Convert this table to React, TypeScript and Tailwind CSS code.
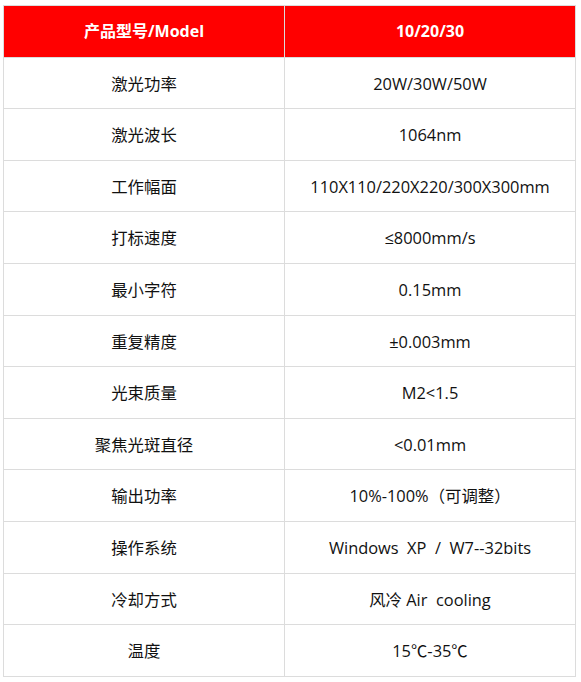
const rows: [string, string][] = [
  ['激光功率', '20W/30W/50W'],
  ['激光波长', '1064nm'],
  ['工作幅面', '110X110/220X220/300X300mm'],
  ['打标速度', '≤8000mm/s'],
  ['最小字符', '0.15mm'],
  ['重复精度', '±0.003mm'],
  ['光束质量', 'M2<1.5'],
  ['聚焦光斑直径', '<0.01mm'],
  ['输出功率', '10%-100%（可调整）'],
  ['操作系统', 'Windows  XP  /  W7--32bits'],
  ['冷却方式', '风冷 Air  cooling'],
  ['温度', '15℃-35℃'],
];

export default function App() {
  return (
    <div
      className="w-[581px] h-[682px] bg-white pt-[5px] pl-[3px]"
      style={{ fontFamily: '"Open Sans", "Noto Sans CJK SC", sans-serif' }}
    >
      <table className="border-collapse w-[573px] text-center whitespace-pre">
        <tbody>
          <tr className="bg-[#ff0000] text-white font-bold text-[16px]">
            <td className="border border-[#dcdcdc] w-[281px] h-[51.6px] p-0">产品型号/Model</td>
            <td className="border border-[#dcdcdc] h-[51.6px] p-0">10/20/30</td>
          </tr>
          {rows.map(([k, v]) => (
            <tr key={k} className="text-[16.4px] text-[#111]">
              <td className="border border-[#dcdcdc] h-[51.6px] p-0 pt-[2px]">{k}</td>
              <td className="border border-[#dcdcdc] h-[51.6px] p-0 pt-[2px]">{v}</td>
            </tr>
          ))}
        </tbody>
      </table>
    </div>
  );
}
